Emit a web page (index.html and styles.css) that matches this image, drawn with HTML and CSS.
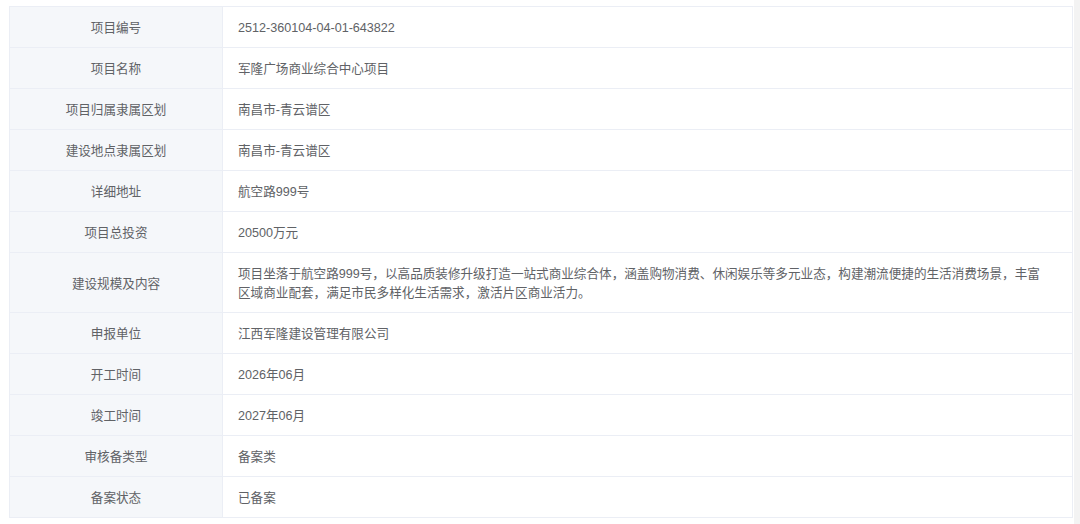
FILE: index.html
```html
<!DOCTYPE html>
<html lang="zh">
<head>
    <meta charset="UTF-8">
    <title>项目信息</title>
    <link rel="stylesheet" href="styles.css">
</head>
<body>
    <div class="page">
        <table class="info-table">
            <tr><th>项目编号</th><td>2512-360104-04-01-643822</td></tr>
            <tr><th>项目名称</th><td>军隆广场商业综合中心项目</td></tr>
            <tr><th>项目归属隶属区划</th><td>南昌市-青云谱区</td></tr>
            <tr><th>建设地点隶属区划</th><td>南昌市-青云谱区</td></tr>
            <tr><th>详细地址</th><td>航空路999号</td></tr>
            <tr><th>项目总投资</th><td>20500万元</td></tr>
            <tr><th>建设规模及内容</th><td>项目坐落于航空路999号，以高品质装修升级打造一站式商业综合体，涵盖购物消费、休闲娱乐等多元业态，构建潮流便捷的生活消费场景，丰富区域商业配套，满足市民多样化生活需求，激活片区商业活力。</td></tr>
            <tr><th>申报单位</th><td>江西军隆建设管理有限公司</td></tr>
            <tr><th>开工时间</th><td>2026年06月</td></tr>
            <tr><th>竣工时间</th><td>2027年06月</td></tr>
            <tr><th>审核备类型</th><td>备案类</td></tr>
            <tr><th>备案状态</th><td>已备案</td></tr>
        </table>
        <div class="scroll-strip"></div>
    </div>
</body>
</html>
```

FILE: styles.css
```css
body {
    margin: 0;
    background: #ffffff;
    font-family: "Liberation Sans", "Noto Sans CJK SC", sans-serif;
    overflow: hidden;
}

.page {
    display: flex;
    align-items: flex-start;
    padding: 6px 0 0 9px;
}

.info-table {
    width: 1064px;
    border-collapse: collapse;
    font-size: 12.6px;
    color: #606266;
}

.info-table th,
.info-table td {
    border: 1px solid #ebeef5;
    padding: 12px 15px 9px;
    line-height: 19px;
    font-weight: normal;
}

.info-table th {
    width: 182px;
    background: #f5f7fa;
    text-align: center;
}

.info-table td {
    text-align: left;
    padding-right: 20px;
}

.scroll-strip {
    width: 6px;
    height: 524px;
    margin-left: 1px;
    margin-top: -6px;
    background: #f3f3f3;
}
```
